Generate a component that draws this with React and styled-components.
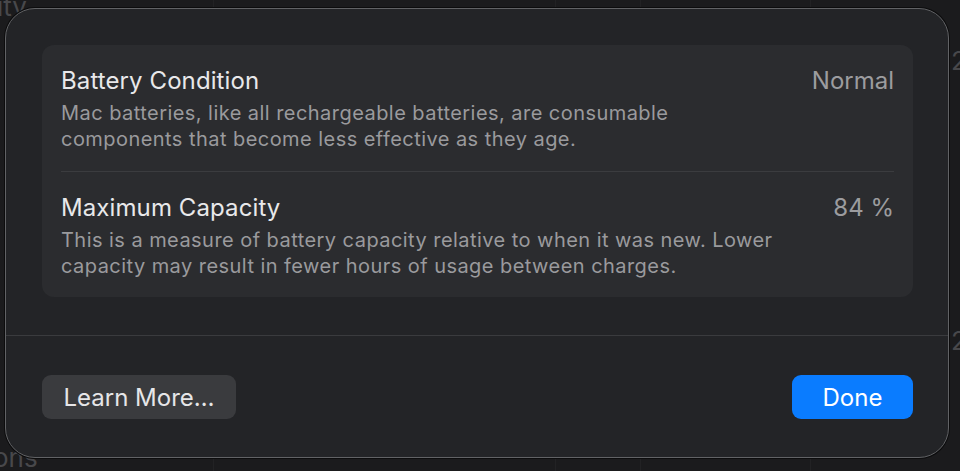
import React from "react";
import styled, { createGlobalStyle } from "styled-components";

const Global = createGlobalStyle`
  html, body { margin: 0; padding: 0; background: #1c1c1e; }
  body { font-family: Inter, "Noto Sans", sans-serif; -webkit-font-smoothing: antialiased; }
`;

const Backdrop = styled.div`
  position: relative;
  width: 960px;
  height: 471px;
  overflow: hidden;
  background: #1b1b1d;
  padding: 8px 11px 0 5px;
  box-sizing: border-box;
`;

const GridLine = styled.div`
  position: absolute;
  top: 0;
  bottom: 0;
  left: ${(p) => p.x}px;
  width: 1px;
  background: #222224;
`;

const BgText = styled.span`
  position: absolute;
  font-size: 26px;
  color: #48484b;
  left: ${(p) => p.x}px;
  top: ${(p) => p.y}px;
  line-height: 1;
`;

const Dialog = styled.div`
  position: relative;
  height: 450px;
  box-sizing: border-box;
  background: #232427;
  border: 1px solid #616265;
  border-radius: 30px;
  box-shadow: 0 0 0 1px #0c0c0d;
  display: flex;
  flex-direction: column;
`;

const Body = styled.div`
  padding: 36px 35px 38px 36px;
  border-bottom: 1px solid #3a3b3e;
`;

const Card = styled.div`
  background: #2b2c2f;
  border-radius: 12px;
  padding: 0 19px;
  height: 252px;
  box-sizing: border-box;
  display: flex;
  flex-direction: column;
`;

const Section = styled.div`
  display: flex;
  justify-content: space-between;
  align-items: flex-start;
  padding: ${(p) => (p.$first ? "21px 0 19px" : "21px 0 0")};
  border-top: ${(p) => (p.$first ? "none" : "1px solid #3b3c3f")};
`;

const TextCol = styled.div`
  display: flex;
  flex-direction: column;
  gap: 4px;
`;

const Title = styled.div`
  font-size: 24px;
  line-height: 30px;
  color: #e8e8ea;
  letter-spacing: 0.1px;
`;

const Desc = styled.div`
  font-size: 20px;
  line-height: 26px;
  color: #9a9a9d;
  letter-spacing: 0.45px;
  white-space: nowrap;
`;

const Value = styled.div`
  font-size: 24px;
  line-height: 30px;
  color: #9c9c9f;
`;

const Footer = styled.div`
  display: flex;
  justify-content: space-between;
  align-items: center;
  padding: 39px 35px 0 36px;
`;

const Button = styled.button`
  height: 44px;
  border: none;
  border-radius: 9px;
  font-family: Inter, "Noto Sans", sans-serif;
  font-size: 24px;
  color: ${(p) => (p.$primary ? "#ffffff" : "#e6e6e8")};
  background: ${(p) => (p.$primary ? "#0a7cff" : "#3a3b3e")};
  width: ${(p) => p.$w}px;
  padding: 0;
  cursor: pointer;
`;

export default function App() {
  return (
    <>
      <Global />
      <Backdrop>
        <GridLine x={213} />
        <GridLine x={555} />
        <GridLine x={640} />
        <GridLine x={810} />
        <BgText x={-3} y={-6}>ity</BgText>
        <BgText x={-7} y={445}>ons</BgText>
        <BgText x={951} y={48}>2</BgText>
        <BgText x={951} y={328}>2</BgText>
        <Dialog>
          <Body>
            <Card>
              <Section $first>
                <TextCol>
                  <Title>Battery Condition</Title>
                  <Desc>
                    Mac batteries, like all rechargeable batteries, are consumable
                    <br />
                    components that become less effective as they age.
                  </Desc>
                </TextCol>
                <Value>Normal</Value>
              </Section>
              <Section>
                <TextCol>
                  <Title>Maximum Capacity</Title>
                  <Desc>
                    This is a measure of battery capacity relative to when it was new. Lower
                    <br />
                    capacity may result in fewer hours of usage between charges.
                  </Desc>
                </TextCol>
                <Value>84 %</Value>
              </Section>
            </Card>
          </Body>
          <Footer>
            <Button $w={194}>Learn More…</Button>
            <Button $primary $w={121}>Done</Button>
          </Footer>
        </Dialog>
      </Backdrop>
    </>
  );
}
